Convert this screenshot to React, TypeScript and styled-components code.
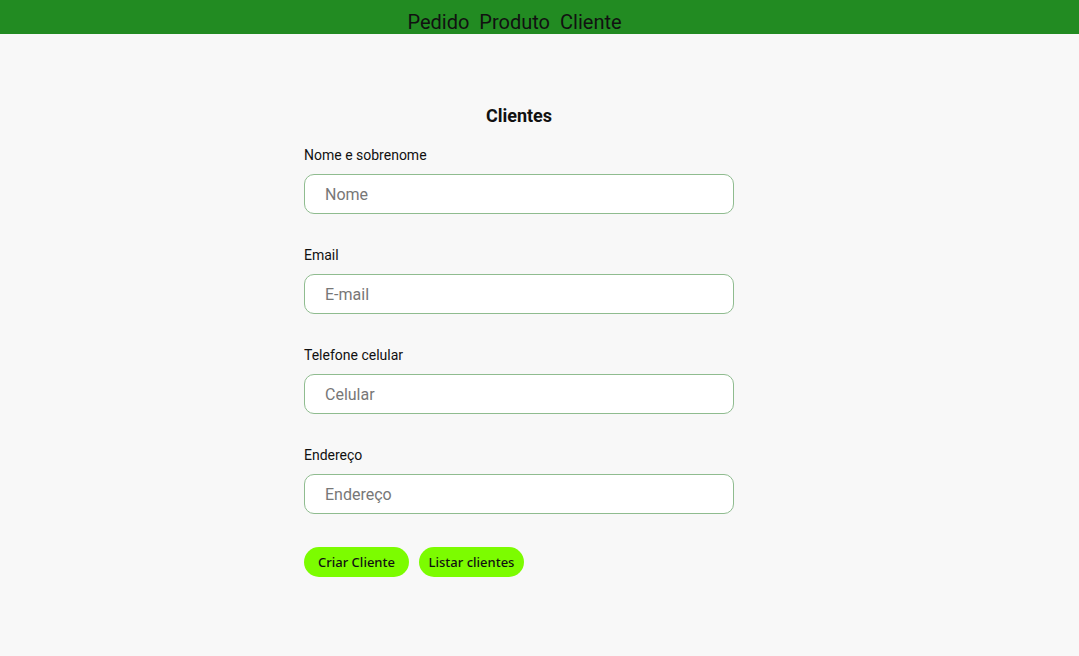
import React from "react";
import styled, { createGlobalStyle } from "styled-components";

const Global = createGlobalStyle`
  html, body { margin: 0; padding: 0; background: #f8f8f8; }
  body { font-family: Roboto, "Liberation Sans", sans-serif; color: #111; }
  * { box-sizing: border-box; }
`;

const Header = styled.header`
  height: 34px;
  background: #228b22;
  display: flex;
  justify-content: center;
  align-items: flex-end;
  gap: 10px;
  padding-right: 50px;
`;

const NavLink = styled.a`
  font-family: Roboto, sans-serif;
  font-size: 20px;
  line-height: 24px;
  color: #111;
  text-decoration: none;
  padding-bottom: 0;
`;

const Main = styled.main`
  display: flex;
  justify-content: center;
  padding-top: 71px;
  padding-right: 41px;
`;

const Form = styled.form`
  width: 430px;
  display: flex;
  flex-direction: column;
`;

const Title = styled.h2`
  margin: 0 0 20px;
  text-align: center;
  font-size: 18px;
  font-weight: 700;
  line-height: 22px;
  color: #111;
`;

const Field = styled.div`
  display: flex;
  flex-direction: column;
  margin-bottom: 33px;
`;

const Label = styled.label`
  font-size: 14px;
  line-height: 17px;
  color: #111;
  margin-bottom: 10px;
`;

const Input = styled.input`
  height: 40px;
  width: 100%;
  border: 1px solid #8fbc8f;
  border-radius: 10px;
  background: #fff;
  padding: 0 20px;
  font-family: Roboto, sans-serif;
  font-size: 16px;
  color: #222;
  outline: none;
  &::placeholder { color: #777; }
`;

const Buttons = styled.div`
  display: flex;
  gap: 10px;
`;

const Button = styled.button`
  width: 105px;
  height: 30px;
  padding: 0;
  border: none;
  border-radius: 15px;
  background: #7cfc00;
  font-family: "Noto Sans", sans-serif;
  font-size: 13px;
  font-weight: 500;
  color: #111;
  cursor: pointer;
`;

const fields = [
  { label: "Nome e sobrenome", ph: "Nome" },
  { label: "Email", ph: "E-mail" },
  { label: "Telefone celular", ph: "Celular" },
  { label: "Endereço", ph: "Endereço" },
];

export default function App() {
  return (
    <>
      <Global />
      <Header>
        <NavLink href="#">Pedido</NavLink>
        <NavLink href="#">Produto</NavLink>
        <NavLink href="#">Cliente</NavLink>
      </Header>
      <Main>
        <Form onSubmit={(e) => e.preventDefault()}>
          <Title>Clientes</Title>
          {fields.map((f) => (
            <Field key={f.label}>
              <Label>{f.label}</Label>
              <Input placeholder={f.ph} />
            </Field>
          ))}
          <Buttons>
            <Button type="button">Criar Cliente</Button>
            <Button type="button">Listar clientes</Button>
          </Buttons>
        </Form>
      </Main>
    </>
  );
}
